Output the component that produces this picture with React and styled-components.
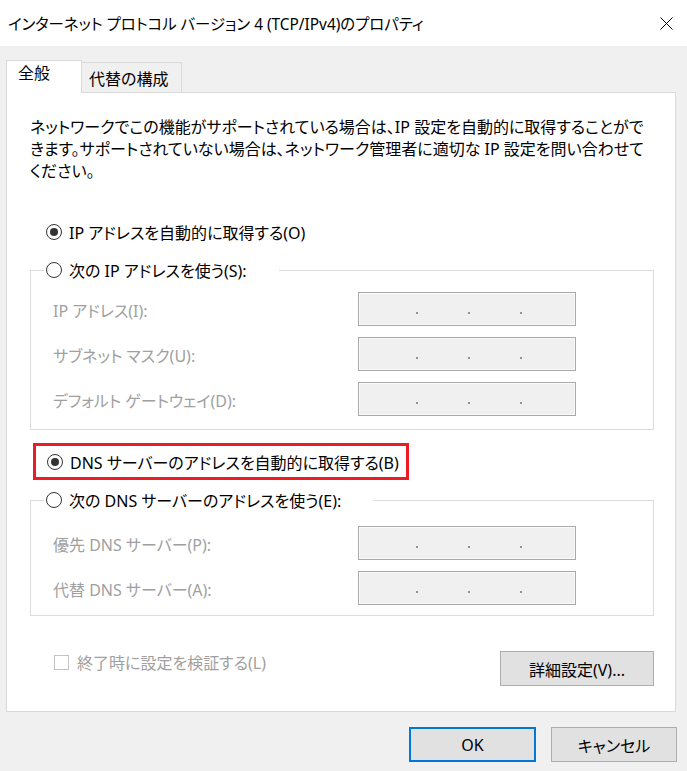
import React from 'react';
import styled, { createGlobalStyle, css } from 'styled-components';

const GlobalStyle = createGlobalStyle`
  html, body {
    margin: 0;
    padding: 0;
    background: #f0f0f0;
  }
`;

const Window = styled.div`
  width: 687px;
  height: 771px;
  background: #f0f0f0;
  display: flex;
  flex-direction: column;
  overflow: hidden;
  font-family: "Noto Sans", "Noto Sans CJK JP", sans-serif;
  font-feature-settings: "palt";
  font-size: 16px;
  color: #000;
`;

const TitleBar = styled.div`
  height: 46px;
  flex: none;
  background: #fff;
  display: flex;
  align-items: center;
  justify-content: space-between;
  padding: 0 14px 0 8px;
  box-sizing: border-box;
`;

const Title = styled.span`
  font-size: 15.4px;
  white-space: nowrap;
`;

const CloseButton = styled.div`
  width: 13px;
  height: 13px;
  display: flex;
`;

const Body = styled.div`
  padding: 14px 11px 0 6px;
`;

const TabStrip = styled.div`
  display: flex;
  align-items: flex-end;
  height: 32px;
`;

const Tab = styled.div`
  box-sizing: border-box;
  border: 1px solid #d9d9d9;
  border-bottom: none;
  white-space: nowrap;
  line-height: 22px;
  ${({ $active }) =>
    $active
      ? css`
          width: 76px;
          height: 33px;
          margin-bottom: -1px;
          position: relative;
          z-index: 1;
          background: #fff;
          padding: 1px 0 0 11px;
        `
      : css`
          width: 100px;
          height: 30px;
          border-left: none;
          background: #f0f0f0;
          padding: 5px 0 0 7px;
        `}
`;

const Panel = styled.div`
  height: 620px;
  box-sizing: border-box;
  background: #fff;
  border: 1px solid #d9d9d9;
  padding: 23px 0 0 23px;
  display: flex;
  flex-direction: column;
  align-items: flex-start;
`;

const Description = styled.p`
  margin: 0;
  line-height: 22px;
  white-space: nowrap;
`;

const RadioRow = styled.label`
  display: flex;
  align-items: center;
  height: 22px;
  gap: 7px;
  white-space: nowrap;
  margin: ${({ $margin }) => $margin || '0'};
`;

const RadioMark = styled.span`
  width: 16px;
  height: 16px;
  box-sizing: border-box;
  border: 1px solid #333;
  border-radius: 50%;
  display: flex;
  align-items: center;
  justify-content: center;
  flex: none;

  &::after {
    content: '';
    width: 8px;
    height: 8px;
    border-radius: 50%;
    background: ${({ $checked }) => ($checked ? '#333' : 'transparent')};
  }
`;

const Group = styled.fieldset`
  width: 624px;
  box-sizing: border-box;
  margin: ${({ $marginTop }) => $marginTop}px 0 0 0;
  border: 1px solid #dcdcdc;
  padding: ${({ $padTop }) => $padTop}px 0 ${({ $padBottom }) => $padBottom}px 13px;
  min-width: 0;
`;

const Legend = styled.legend`
  padding: 0 32px 0 2px;
`;

const FieldGrid = styled.div`
  display: grid;
  grid-template-columns: 305px 218px;
  row-gap: 11px;
  padding-left: 9px;
  align-items: center;
`;

const FieldLabel = styled.span`
  color: #a0a0a0;
  white-space: nowrap;
  line-height: 22px;
  padding-top: 4px;
`;

const IpBox = styled.div`
  height: 34px;
  box-sizing: border-box;
  border: 1px solid #a9a9a9;
  box-shadow: inset 0 0 0 1px #fafafa;
  background: #f0f0f0;
  display: flex;
  align-items: center;
  padding-left: 6px;
`;

const IpField = styled.span`
  width: ${({ $w }) => $w}px;
  flex: none;
`;

const IpDot = styled.span`
  width: 2px;
  height: 2px;
  flex: none;
  margin-top: 7px;
  background: #8a93a0;
`;

const Highlight = styled.div`
  margin: 13px 0 0 3px;
  width: 376px;
  height: 37px;
  box-sizing: border-box;
  border: 3px solid #ed1c24;
  display: flex;
  align-items: center;
  padding-left: 11px;
`;

const BottomRow = styled.div`
  width: 624px;
  margin-top: 35px;
  padding-left: 24px;
  box-sizing: border-box;
  display: flex;
  justify-content: space-between;
  align-items: flex-start;
`;

const CheckRow = styled.label`
  display: flex;
  align-items: center;
  height: 22px;
  gap: 8px;
  color: #a0a0a0;
  white-space: nowrap;
`;

const CheckBox = styled.span`
  width: 15px;
  height: 15px;
  box-sizing: border-box;
  border: 1px solid #c4c4c4;
  background: #fff;
  flex: none;
`;

const Button = styled.button`
  font: inherit;
  font-feature-settings: "palt";
  color: #000;
  height: 35px;
  width: ${({ $w }) => $w}px;
  box-sizing: border-box;
  background: #e1e1e1;
  border: ${({ $default }) => ($default ? '2px solid #0078d7' : '1px solid #adadad')};
  padding: 0;
  display: flex;
  align-items: center;
  justify-content: center;
  white-space: nowrap;
`;

const DialogButtons = styled.div`
  display: flex;
  justify-content: flex-end;
  gap: 15px;
  padding-top: 15px;
  margin-right: -1px;
`;

const IpInput = () => (
  <IpBox>
    <IpField $w={51} />
    <IpDot />
    <IpField $w={50} />
    <IpDot />
    <IpField $w={50} />
    <IpDot />
  </IpBox>
);

const Radio = ({ checked, children, margin }) => (
  <RadioRow $margin={margin}>
    <RadioMark $checked={checked} />
    <span>{children}</span>
  </RadioRow>
);

const CloseIcon = () => (
  <CloseButton>
    <svg width="13" height="13" viewBox="0 0 13 13">
      <path d="M0.5 0.5 L12.5 12.5 M12.5 0.5 L0.5 12.5" stroke="#000" strokeWidth="1" fill="none" />
    </svg>
  </CloseButton>
);

export default function App() {
  return (
    <Window>
      <GlobalStyle />
      <TitleBar>
        <Title>インターネット プロトコル バージョン 4 (TCP/IPv4)のプロパティ</Title>
        <CloseIcon />
      </TitleBar>
      <Body>
        <TabStrip>
          <Tab $active>全般</Tab>
          <Tab>代替の構成</Tab>
        </TabStrip>
        <Panel>
          <Description>
            ネットワークでこの機能がサポートされている場合は、IP 設定を自動的に取得することがで
            <br />
            きます。サポートされていない場合は、ネットワーク管理者に適切な IP 設定を問い合わせて
            <br />
            ください。
          </Description>

          <Radio checked margin="39px 0 0 16px">IP アドレスを自動的に取得する(O)</Radio>

          <Group $marginTop={16} $padTop={11} $padBottom={13}>
            <Legend>
              <Radio>次の IP アドレスを使う(S):</Radio>
            </Legend>
            <FieldGrid>
              <FieldLabel>IP アドレス(I):</FieldLabel>
              <IpInput />
              <FieldLabel>サブネット マスク(U):</FieldLabel>
              <IpInput />
              <FieldLabel>デフォルト ゲートウェイ(D):</FieldLabel>
              <IpInput />
            </FieldGrid>
          </Group>

          <Highlight>
            <Radio checked>DNS サーバーのアドレスを自動的に取得する(B)</Radio>
          </Highlight>

          <Group $marginTop={9} $padTop={15} $padBottom={10}>
            <Legend>
              <Radio>次の DNS サーバーのアドレスを使う(E):</Radio>
            </Legend>
            <FieldGrid>
              <FieldLabel>優先 DNS サーバー(P):</FieldLabel>
              <IpInput />
              <FieldLabel>代替 DNS サーバー(A):</FieldLabel>
              <IpInput />
            </FieldGrid>
          </Group>

          <BottomRow>
            <CheckRow>
              <CheckBox />
              <span>終了時に設定を検証する(L)</span>
            </CheckRow>
            <Button $w={154}>詳細設定(V)...</Button>
          </BottomRow>
        </Panel>
        <DialogButtons>
          <Button $w={127} $default>OK</Button>
          <Button $w={126}>キャンセル</Button>
        </DialogButtons>
      </Body>
    </Window>
  );
}
